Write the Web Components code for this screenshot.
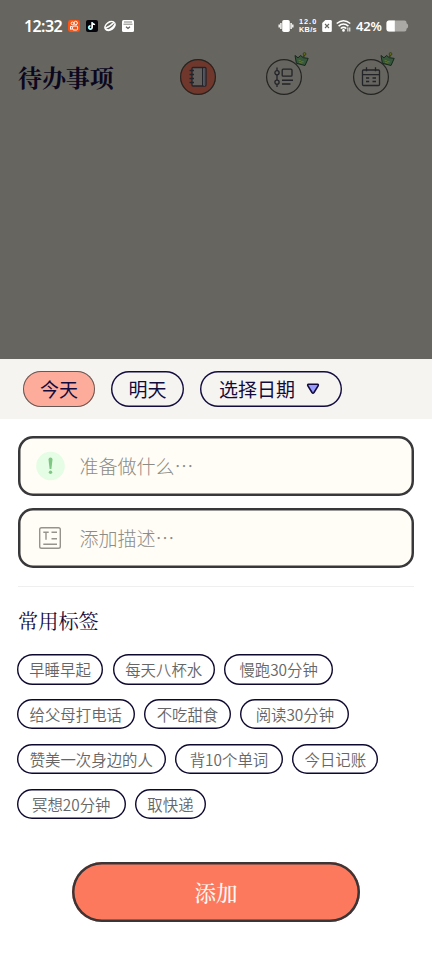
<!DOCTYPE html>
<html lang="zh-CN">
<head>
<meta charset="utf-8">
<title>待办事项</title>
<style>
html,body{margin:0;padding:0;background:#fff}
body{font-family:"Noto Sans CJK SC",sans-serif;--serif:"Noto Serif CJK SC","Noto Serif SC","Noto Sans CJK SC",serif;--ink:#120b3d}
</style>
</head>
<body>
<todo-page></todo-page>
<script>
const define = (name, html) => customElements.define(name, class extends HTMLElement {
  constructor() {
    super();
    const t = document.createElement('template');
    t.innerHTML = html;
    this.attachShadow({mode: 'open'}).append(t.content.cloneNode(true));
    const w = this.getAttribute('width');
    if (w) this.style.width = w + 'px';
  }
});

define('status-bar', `
<style>
:host{display:flex;align-items:center;height:52px;padding:0 23px 0 24px;box-sizing:border-box;color:#fff;font-family:"Noto Sans",sans-serif}
.time{font-size:16px;font-weight:600;width:44px;line-height:20px;letter-spacing:-.6px;white-space:nowrap}
svg{display:block;flex:none}
.net{display:flex;flex-direction:column;font:700 7.300px/8px "Liberation Sans",sans-serif;width:19px;margin:0 4px 0 5px;white-space:nowrap}
.net span{height:8px}
.net span:first-child{letter-spacing:1px}
.net span:last-child{letter-spacing:.3px}
.pct{font-size:13px;font-weight:600;margin-left:4px;width:28px;line-height:20px;letter-spacing:-.2px}
.gap{flex:1}
</style>
<span class="time">12:32</span>
<svg width="68" height="14" viewBox="0 0 68 14">
 <rect x="0" y="1" width="12" height="12" rx="2.4" fill="#fb5414"/>
 <g fill="none" stroke="#fff" stroke-width="1"><circle cx="4.5" cy="4.4" r="1.4"/><circle cx="7.7" cy="4" r="1.7"/><rect x="4.6" y="7" width="5" height="4" rx="1.2"/><path d="M4.6 8L2.5 7.3v3l2.1-.6"/></g>
 <rect x="18" y="1" width="12" height="12" rx="2" fill="#05050b"/>
 <path d="M24.3 3.2v5.4a1.7 1.7 0 1 1-1.7-1.7M24.3 3.6q.8 2 2.8 2" fill="none" stroke="#28dce2" stroke-width="1.3" transform="translate(-.5 -.3)"/>
 <path d="M24.3 3.2v5.4a1.7 1.7 0 1 1-1.7-1.7M24.3 3.6q.8 2 2.8 2" fill="none" stroke="#fff" stroke-width="1.4"/>
 <ellipse cx="42" cy="7" rx="6.3" ry="4.6" transform="rotate(-35 42 7)" fill="#fff"/>
 <path d="M38 9.600q3.500-.6 8.800-6.200-1.600 4.600-6.300 6.900z" fill="#66655f"/><path d="M37.600 8.200q.2-2.700 4-4.500 1.900-.8 3.500-.6-3.300 3.900-7.500 5.100z" fill="#66655f"/>
 <rect x="54" y="1" width="12" height="12" rx="1.5" fill="#fff"/>
 <path d="M56 3h8M55.5 5.2h9" stroke="#66655f" stroke-width=".8"/><path d="M58 7.700l2 1.800 2-1.800" fill="none" stroke="#66655f" stroke-width="1.2"/>
</svg>
<span class="gap"></span>
<svg width="16" height="14" viewBox="0 0 16 14"><rect x="4.2" y="1" width="7.6" height="12" rx="1.8" fill="#fff"/><path d="M2.9 4v6M13.1 4v6M1.200 5.500v3M14.800 5.500v3" stroke="#fff" stroke-width="1.4"/></svg>
<span class="net"><span>12.0</span><span>KB/s</span></span>
<svg width="10" height="14" viewBox="0 0 10 14"><path d="M3.4 1H8.5q1.3 0 1.3 1.3v9.4q0 1.3-1.3 1.3h-7Q.2 13 .2 11.700V4z" fill="#fff"/><path d="M3 5l4 4M7 5L3 9" stroke="#66655f" stroke-width="1.1"/></svg>
<svg width="16" height="14" viewBox="0 0 16 14" style="margin-left:4px"><g fill="none" stroke="#fff" stroke-width="1.6"><path d="M.7 4.500q6.800-5.500 13.600 0M2.600 7.100q4.900-4.200 9.800 0M4.700 9.500q2.800-2.300 5.600 0"/></g><circle cx="7.500" cy="11.400" r="1.300" fill="#fff"/><path d="M11.900 8.500v4M13.800 8.500v4" stroke="#fff" stroke-width="1"/></svg>
<span class="pct">42%</span>
<svg width="24" height="12" viewBox="0 0 24 12" style="margin:0 -1px 0 2px"><path d="M3 .5h15.500q2 0 2 2v.8q1.700.5 1.700 2.700t-1.700 2.700v.8q0 2-2 2H3q-2.500 0-2.500-2.500V3Q.5.5 3 .5z" fill="#aaa9a5"/><path d="M3 .5h5.800v11H3q-2.500 0-2.500-2.500V3Q.5.5 3 .5z" fill="#fff"/></svg>`);

define('crown-badge', `
<style>:host{display:block;width:17px;height:17px}svg{display:block}</style>
<svg width="17" height="17" viewBox="0 0 17 17"><path d="M1 3.500l3 2.300L6.600 3.500l2.700 2.200 4.900.7-3.200 7.100L2.400 11.300z" fill="#36573b" stroke="#17281c" stroke-width="1" stroke-linejoin="round"/><path d="M4.500 8.300l2 .2 1 1 2.300.4M5 10.200l3.500 1" fill="none" stroke="#5e7430" stroke-width="1"/><path d="M10.300 2.900L9.500 5.500" stroke="#263b18" stroke-width="1.300"/><circle cx="10.500" cy="2" r="1.400" fill="#666a18" stroke="#263b18" stroke-width=".7"/></svg>`);

define('round-tab', `
<style>
:host{display:grid;place-items:center;width:36px;height:36px;box-sizing:border-box;box-shadow:inset 0 0 0 1.200px #242422;border-radius:50%;position:relative}
:host([active]){background:#70382c}
::slotted(crown-badge){position:absolute;right:-8.500px;top:-7.500px}
</style><slot></slot>`);

define('page-header', `
<style>
:host{display:flex;align-items:center;height:50px;padding-left:18px;box-sizing:border-box}
h1{font:700 24px/36px var(--serif);color:#0b071e;margin:0;width:162px;letter-spacing:-.1px}
nav{display:flex;gap:50.300px}
svg{display:block;fill:none;stroke:#23232a;stroke-width:1.300}
</style>
<h1>待办事项</h1>
<nav>
<round-tab active><svg width="22" height="22" viewBox="0 0 22 22"><rect x="5" y="1.500" width="14" height="18.500" rx="1" fill="#625f5c"/><path d="M15.500 2v18" stroke-width="1"/><path d="M17.300 2v18" stroke="#4d5058" stroke-width="1.500"/><path d="M2.500 4.500H7M2.500 8.500H7M2.500 12.500H7M2.500 16.500H7"/></svg></round-tab>
<round-tab><svg width="20" height="20" viewBox="0 0 20 20"><path d="M3 .5v3M3 8v5M3 17.500V20"/><circle cx="3" cy="5.700" r="2.100"/><circle cx="3" cy="15.200" r="2.100"/><rect x="8.200" y="2.200" width="9.800" height="7" rx="1"/><path d="M8 13.300h11M8 17h8.500" stroke-width="1.400"/></svg><crown-badge></crown-badge></round-tab>
<round-tab><svg width="20" height="22" viewBox="0 0 20 22"><rect x="1.500" y="4" width="17" height="15.500" rx="1"/><path d="M1.500 8.700h17M5.500 1.200v4M14.500 1.200v4"/><path d="M5 12h3.200M11.500 12h3.500M5 15.500h3.200M11.500 15.500h3.500"/></svg><crown-badge></crown-badge></round-tab>
</nav>`);

define('date-chip', `
<style>
:host{display:flex;align-items:center;justify-content:center;gap:11px;height:35.500px;box-sizing:border-box;box-shadow:inset 0 0 0 1.400px var(--ink);border-radius:18px;color:var(--ink);font-size:19px;font-weight:400;line-height:28px;white-space:nowrap}
:host([active]){background:#fdab9a;box-shadow:inset 0 0 0 1px #655955}
::slotted(svg){display:block}
</style><slot></slot>`);

define('entry-field', `
<style>
:host{display:flex;align-items:center;height:60px;padding-left:17px;box-sizing:border-box;box-shadow:inset 0 0 0 2.500px #38383a;border-radius:15px;background:#fffdf6;color:#8c8b86;font-size:19px;font-weight:300;line-height:28px}
.icon{display:grid;place-items:center;width:30px;height:30px;margin-right:14.500px}
</style><span class="icon"><slot name="icon"></slot></span><span><slot></slot></span>`);

define('tag-chip', `
<style>:host{display:flex;align-items:center;justify-content:center;height:30.500px;box-sizing:border-box;box-shadow:inset 0 0 0 1.400px #0d0830;border-radius:16px;color:#666;font-size:15.400px;font-weight:350;line-height:22px;white-space:nowrap}</style><slot></slot>`);

define('tag-row', `<style>:host{display:flex;gap:9.700px;height:44.900px;align-items:flex-start}</style><slot></slot>`);

define('primary-button', `
<style>:host{display:block}button{display:block;width:288px;height:60px;margin:0 auto;border:0;box-shadow:inset 0 0 0 2.500px #3a3637;border-radius:30px;background:#fd795e;color:#fff8f2;font:500 21.500px/30px var(--serif);padding:0}</style><button><slot></slot></button>`);

define('todo-page', `
<style>
:host{display:flex;flex-direction:column;width:432px;height:964px;overflow:hidden;background:#fff}
.back{height:359px;background:#66655f;box-sizing:border-box}
.dates{display:flex;gap:16.300px;align-items:center;height:60px;padding-left:23px;box-sizing:border-box;background:#f5f4f1}
.form{display:flex;flex-direction:column;gap:12px;padding:17px 18px 18px}
.line{height:1px;background:#efefef;margin:0 18px}
h2{font:400 20.200px/30px var(--serif);color:var(--ink);margin:19px 0 18px 18px}
.tags{padding-left:17px;height:208px;box-sizing:border-box}
</style>
<div class="back"><status-bar></status-bar><page-header></page-header></div>
<div class="dates"><date-chip active width="72">今天</date-chip><date-chip width="72.500">明天</date-chip><date-chip width="142"><span>选择日期</span><svg width="14" height="12" viewBox="0 0 14 12" style="margin-right:3px"><path d="M2.500 1.300h9q1.300.3.600 1.500L8 9.500q-1 1.200-2 0L1.900 2.800Q1.200 1.600 2.500 1.300z" fill="#989cff" stroke="#120b3d" stroke-width="1.600"/></svg></date-chip></div>
<div class="form">
<entry-field><svg slot="icon" width="30" height="30" viewBox="0 0 30 30"><circle cx="15.500" cy="15" r="14.300" fill="#e4fde4"/><path d="M13.500 8.500a2 2 0 0 1 4 0L16.400 18h-1.800z" fill="#7fc784"/><circle cx="15.500" cy="21.300" r="1.700" fill="#7fc784"/></svg>准备做什么…</entry-field>
<entry-field><svg slot="icon" width="24" height="24" viewBox="0 0 24 24" fill="none" stroke="#96938c" stroke-width="1.400"><rect x="1.700" y="1.700" width="20.600" height="20.600" rx="1.800"/><path d="M5.300 6.300h5.400M8 6.300v7.400M13.500 6.300H19M13.500 12.700H19M5.300 18.300H19"/></svg>添加描述…</entry-field>
</div>
<div class="line"></div>
<h2>常用标签</h2>
<div class="tags">
<tag-row><tag-chip width="86">早睡早起</tag-chip><tag-chip width="102">每天八杯水</tag-chip><tag-chip width="108.500">慢跑30分钟</tag-chip></tag-row>
<tag-row><tag-chip width="117.500">给父母打电话</tag-chip><tag-chip width="86.500">不吃甜食</tag-chip><tag-chip width="109">阅读30分钟</tag-chip></tag-row>
<tag-row><tag-chip width="148.500">赞美一次身边的人</tag-chip><tag-chip width="107.500">背10个单词</tag-chip><tag-chip width="86">今日记账</tag-chip></tag-row>
<tag-row><tag-chip width="108.500">冥想20分钟</tag-chip><tag-chip width="70.500">取快递</tag-chip></tag-row>
</div>
<primary-button>添加</primary-button>`);
</script>
</body>
</html>
